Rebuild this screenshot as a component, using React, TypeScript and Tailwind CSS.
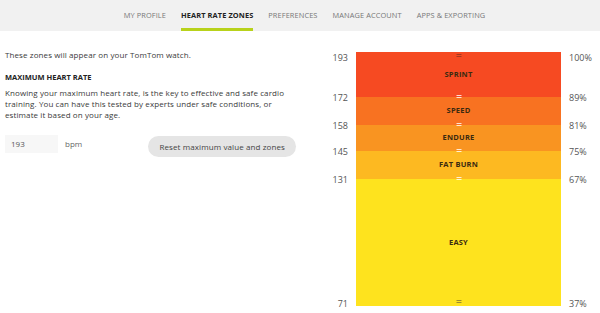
import React from 'react'

const TABS = ['My profile', 'Heart rate zones', 'Preferences', 'Manage account', 'Apps & exporting']

const ZONES = [
  { name: 'SPRINT', h: 45, color: 'bg-[#f64a22]' },
  { name: 'SPEED', h: 28, color: 'bg-[#f87221]' },
  { name: 'ENDURE', h: 26, color: 'bg-[#f99421]' },
  { name: 'FAT BURN', h: 28, color: 'bg-[#fdb921]' },
  { name: 'EASY', h: 127, color: 'bg-[#fee31e]' },
]

// left bpm / right percent labels, y = offset inside chart
const MARKS = [
  { bpm: 193, pct: '100%', y: 5 },
  { bpm: 172, pct: '89%', y: 45 },
  { bpm: 158, pct: '81%', y: 73 },
  { bpm: 145, pct: '75%', y: 99 },
  { bpm: 131, pct: '67%', y: 127 },
  { bpm: 71, pct: '37%', y: 251 },
]

function Handle({ dark, tone }: { dark?: boolean; tone?: string }) {
  return (
    <div className="flex flex-col gap-[1px] items-center">
      <div className={`w-[5px] h-[1px] ${dark ? tone : 'bg-white/80'}`} />
      <div className={`w-[5px] h-[1px] ${dark ? tone : 'bg-white/80'}`} />
    </div>
  )
}

export default function App() {
  return (
    <div className="w-[600px] h-[313px] bg-white overflow-hidden" style={{ fontFamily: '"Open Sans", sans-serif' }}>
      {/* Tabs */}
      <div className="h-[31px] bg-[#f1f1f1] flex justify-center gap-[15px] pl-[9px]">
        {TABS.map((t, i) => (
          <div
            key={t}
            className={`h-full flex items-center uppercase text-[7.4px] tracking-[0.1px] border-b-[3px] pt-[3px] ${
              i === 1 ? 'border-[#b8d21b] text-[#222] font-bold' : 'border-transparent text-[#777]'
            }`}
          >
            {t}
          </div>
        ))}
      </div>

      <div className="flex">
        {/* Left column */}
        <div className="w-[320px] pl-[5px] pt-[18px] text-[#3a3a3a]">
          <p className="text-[8px] leading-[11px] tracking-[0.1px]">These zones will appear on your TomTom watch.</p>
          <h4 className="mt-[12px] text-[7.5px] leading-[11px] font-bold text-[#222]">MAXIMUM HEART RATE</h4>
          <p className="mt-[4px] text-[8px] leading-[11px] tracking-[0.1px] w-[300px]">
            Knowing your maximum heart rate, is the key to effective and safe cardio training. You can have this tested by experts under safe conditions, or estimate it based on your age.
          </p>
          <div className="mt-[15px] flex items-start">
            <div className="w-[53px] h-[18px] bg-[#f7f7f7] flex items-center pl-[6px] text-[8px] text-[#555]">193</div>
            <span className="ml-[7px] h-[18px] flex items-center text-[8px] text-[#666]">bpm</span>
            <button className="ml-[66px] mt-[1px] h-[21px] w-[148px] rounded-full bg-[#e5e5e5] text-[8px] tracking-[0.1px] text-[#444]">
              Reset maximum value and zones
            </button>
          </div>
        </div>

        {/* Chart */}
        <div className="relative flex-1 pt-[21px]">
          <div className="ml-[36px] w-[205px] flex flex-col">
            {ZONES.map((z, i) => (
              <div
                key={z.name}
                className={`${z.color} relative flex items-center justify-center text-[7.5px] font-bold tracking-[0.2px] text-[#3a2a10]`}
                style={{ height: z.h }}
              >
                {z.name}
                {i === 0 && (
                  <div className="absolute top-[2px] left-1/2 -translate-x-1/2">
                    <Handle dark tone="bg-[#a33a20]" />
                  </div>
                )}
                {i > 0 && (
                  <div className="absolute -top-[2px] left-1/2 -translate-x-1/2">
                    <Handle />
                  </div>
                )}
                {i === ZONES.length - 1 && (
                  <div className="absolute bottom-[3px] left-1/2 -translate-x-1/2">
                    <Handle dark tone="bg-[#9c8c30]" />
                  </div>
                )}
              </div>
            ))}
          </div>
          {MARKS.map(m => (
            <React.Fragment key={m.bpm}>
              <div
                className="absolute left-0 w-[28px] text-right text-[9px] leading-[11px] text-[#555] -translate-y-1/2"
                style={{ top: 21 + m.y }}
              >
                {m.bpm}
              </div>
              <div
                className="absolute left-[249px] text-[9px] leading-[11px] text-[#555] -translate-y-1/2"
                style={{ top: 21 + m.y }}
              >
                {m.pct}
              </div>
            </React.Fragment>
          ))}
        </div>
      </div>
    </div>
  )
}
